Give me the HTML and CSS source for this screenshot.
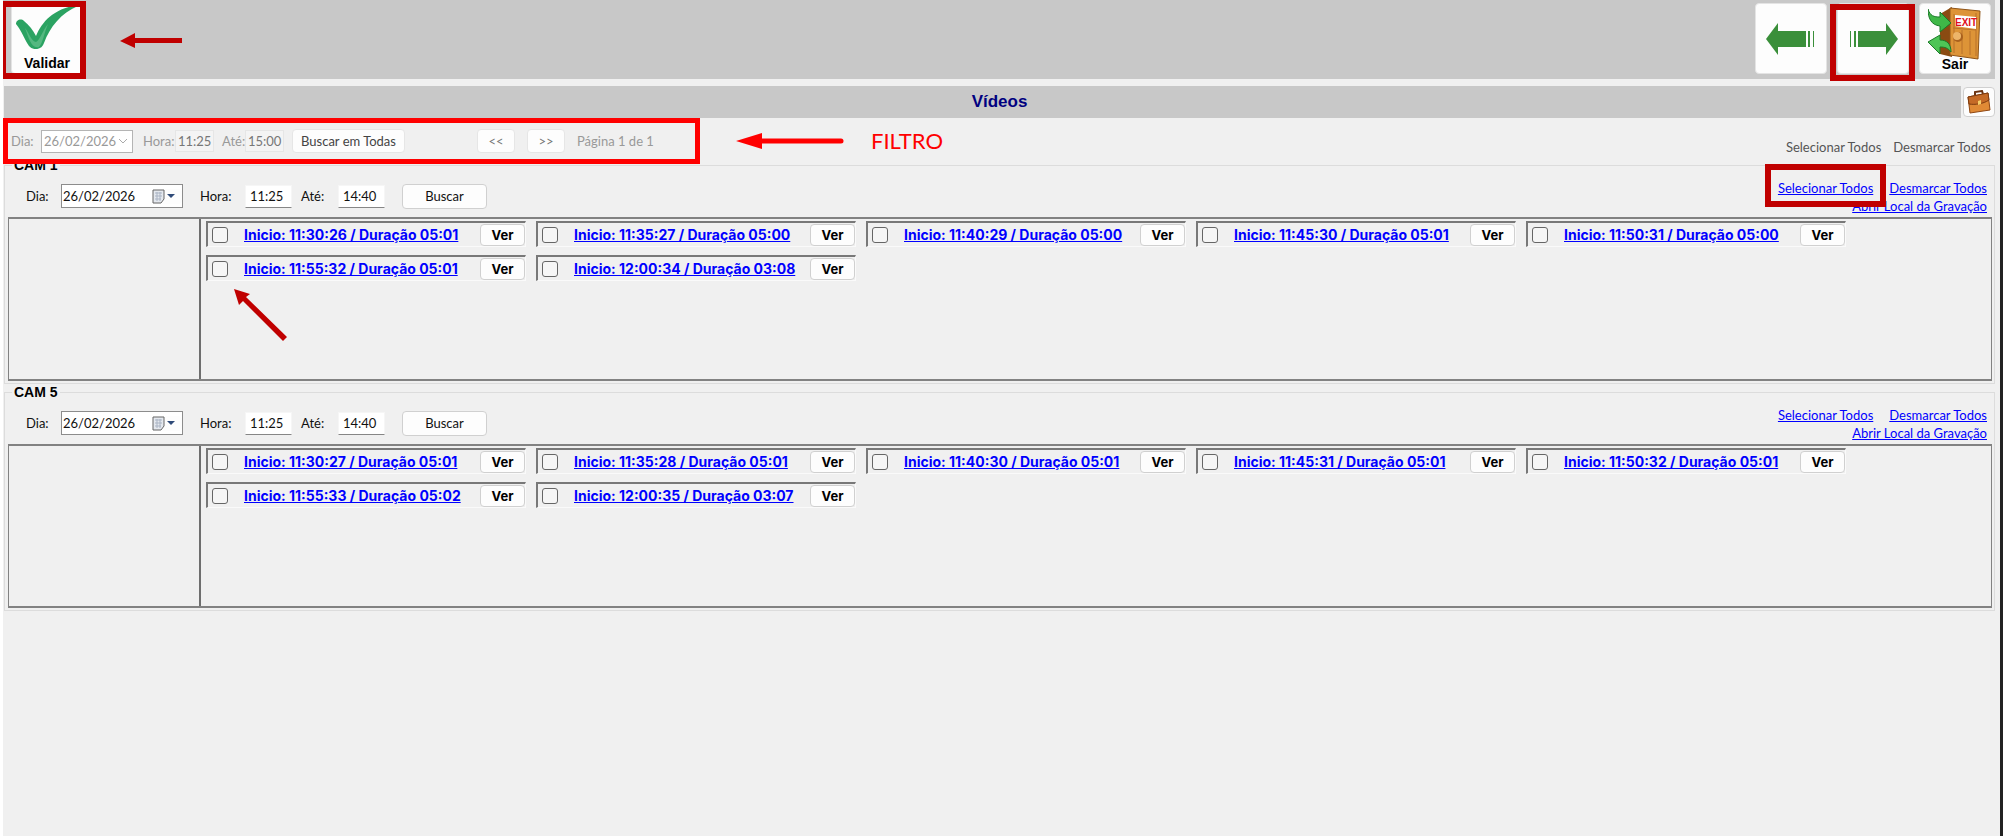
FILE: index.html
```
<!DOCTYPE html>
<html lang="pt">
<head>
    <meta charset="UTF-8">
    <meta name="viewport" content="width=device-width, initial-scale=1.0">
    <title>Vídeos</title>
    <link rel="stylesheet" href="styles.css">
</head>
<body>

    <header class="barra">
        <div class="marcado marcado-validar">
            <button class="btn-barra" type="button">
                <svg width="64" height="44" viewBox="0 0 64 44">
                    <path d="M1 19C1 15 6 13 9 16C14 20 18 25 21 31C27 17 38 4 62 0L63 1C46 8 35 22 29 38C27 45 18 46 14 41C9 34 7 26 1 19Z" fill="#2ba362"/>
                    <path d="M10 23C14 28 17 37 21 37C25 35 28 25 33 19C29 28 28 38 24 42C16 44 14 33 10 23Z" fill="#55b880"/>
                </svg>
                <span>Validar</span>
            </button>
        </div>
        <svg class="seta-validar" width="62" height="16" viewBox="0 0 62 16">
            <path d="M0 8L15 0V5H62V10H15V15Z" fill="#c00000"/>
        </svg>

        <nav class="barra-nav">
            <button class="btn-barra btn-icone" type="button" aria-label="Anterior">
                <svg width="50" height="32" viewBox="0 0 50 32">
                    <path d="M0 16L12 0V8H40V24H12V32ZM42 8H44V24H42ZM47 8H48V24H47Z" fill="#3a8f3a"/>
                </svg>
            </button>
            <div class="marcado marcado-proximo">
                <button class="btn-barra btn-icone" type="button" aria-label="Próximo">
                    <svg width="50" height="32" viewBox="0 0 50 32">
                        <path d="M50 16L38 0V8H10V24H38V32ZM6 8H8V24H6ZM2 8H3V24H2Z" fill="#3a8f3a"/>
                    </svg>
                </button>
            </div>
            <button class="btn-barra btn-sair" type="button">
                <svg width="54" height="54" viewBox="0 0 54 54">
                    <path d="M12 8L24 1V51L12 48Z" fill="#8a4b12"/>
                    <path d="M22 2L52 5L50 53L22 49Z" fill="#dd9437" stroke="#8f5417"/>
                    <path d="M25 22L48 24M26 8V47M48 7V50M34 24V48M42 25V49" stroke="#b8712a" fill="none"/>
                    <path d="M27 9L48 11V23L27 20Z" fill="#fff"/>
                    <text x="27" y="20" class="placa">EXIT</text>
                    <circle cx="30" cy="31" r="5" fill="#a9611e"/>
                    <circle cx="29" cy="30" r="4" fill="#edb569"/>
                    <path d="M0 3C2 10 6 11 12 11V6L23 17L12 26V20C3 19 0 12 0 3Z" fill="#3fb848" stroke="#1b7a28"/>
                    <path d="M0 36L12 29V34C19 34 23 38 23 46C20 42 17 41 12 41V48Z" fill="#4ec557" stroke="#1b7a28"/>
                </svg>
                <span>Sair</span>
            </button>
        </nav>
    </header>

    <div class="titulo">
        <h1>Vídeos</h1>
        <button class="btn-mala" type="button" aria-label="Arquivos">
            <svg width="24" height="24" viewBox="0 0 24 24">
                <path d="M8 5V2L15 1L16 4" fill="none" stroke="#6b3210" stroke-width="2"/>
                <path d="M1 7L21 3L23 20L3 23Z" fill="#e08a35" stroke="#8f4713"/>
                <path d="M1 7L21 3L22 10C16 14 8 15 2 14Z" fill="#c56a26" stroke="#7e3b10"/>
                <path d="M11 11L14 10V14L11 15Z" fill="#f6cf6a"/>
            </svg>
        </button>
    </div>

    <section class="filtro">
        <div class="filtro-campos">
            <label class="filtro-rotulo-dia" for="filtro-dia">Dia:</label>
            <select id="filtro-dia" class="filtro-dia" disabled>
                <option>26/02/2026</option>
            </select>
            <label class="filtro-rotulo-hora" for="filtro-hora">Hora:</label>
            <input id="filtro-hora" class="filtro-hora" type="text" value="11:25" disabled>
            <label class="filtro-rotulo-ate" for="filtro-ate">Até:</label>
            <input id="filtro-ate" class="filtro-hora" type="text" value="15:00" disabled>
            <button class="btn-todas" type="button">Buscar em Todas</button>
            <button class="btn-pagina" type="button">&lt;&lt;</button>
            <button class="btn-pagina" type="button">&gt;&gt;</button>
            <span class="pagina">Página 1 de 1</span>
        </div>
        <div class="nota-filtro">
            <svg width="108" height="18" viewBox="0 0 108 18">
                <path d="M0 9L26 1V17Z" fill="#f00"/>
                <path d="M24 9H105" stroke="#f00" stroke-width="5" stroke-linecap="round"/>
            </svg>
            <span>FILTRO</span>
        </div>
        <div class="filtro-acoes">
            <a href="#">Selecionar Todos</a>
            <a href="#">Desmarcar Todos</a>
        </div>
    </section>

    <fieldset class="camera">
        <legend>CAM 1</legend>
        <div class="camera-topo">
            <div class="campos">
                <label class="rotulo-dia" for="dia-1">Dia:</label>
                <div class="data">
                    <input id="dia-1" type="text" value="26/02/2026">
                    <button type="button" aria-label="Abrir calendário">
                        <svg width="24" height="15" viewBox="0 0 24 15">
                            <path d="M1 1H12V10L9 14H1Z" fill="#e4e8ee" stroke="#666"/>
                            <path d="M3 4H10M3 7H10M3 10H9M5 3V12M8 3V12" stroke="#aab4c4"/>
                            <path d="M15 5H23L19 9Z" fill="#2f4a78"/>
                        </svg>
                    </button>
                </div>
                <label class="rotulo-hora" for="hora-1">Hora:</label>
                <input id="hora-1" class="hora" type="text" value="11:25">
                <label class="rotulo-ate" for="ate-1">Até:</label>
                <input id="ate-1" class="hora" type="text" value="14:40">
                <button class="btn-buscar" type="button">Buscar</button>
            </div>
            <div class="acoes">
                <div class="acoes-linha">
                    <a class="selecionar selecionar-marcado" href="#">Selecionar Todos</a>
                    <a href="#">Desmarcar Todos</a>
                </div>
                <a href="#">Abrir Local da Gravação</a>
            </div>
        </div>
        <div class="painel">
            <div class="previa"></div>
            <div class="videos">
                <div class="video">
                    <input type="checkbox" aria-label="Selecionar 11:30:26">
                    <a href="#">Inicio: 11:30:26 / Duração 05:01</a>
                    <button type="button">Ver</button>
                </div>
                <div class="video">
                    <input type="checkbox" aria-label="Selecionar 11:35:27">
                    <a href="#">Inicio: 11:35:27 / Duração 05:00</a>
                    <button type="button">Ver</button>
                </div>
                <div class="video">
                    <input type="checkbox" aria-label="Selecionar 11:40:29">
                    <a href="#">Inicio: 11:40:29 / Duração 05:00</a>
                    <button type="button">Ver</button>
                </div>
                <div class="video">
                    <input type="checkbox" aria-label="Selecionar 11:45:30">
                    <a href="#">Inicio: 11:45:30 / Duração 05:01</a>
                    <button type="button">Ver</button>
                </div>
                <div class="video">
                    <input type="checkbox" aria-label="Selecionar 11:50:31">
                    <a href="#">Inicio: 11:50:31 / Duração 05:00</a>
                    <button type="button">Ver</button>
                </div>
                <div class="video">
                    <input type="checkbox" aria-label="Selecionar 11:55:32">
                    <a href="#">Inicio: 11:55:32 / Duração 05:01</a>
                    <button type="button">Ver</button>
                    <svg class="seta-caixa" width="54" height="54" viewBox="0 0 54 54">
                        <path d="M0 0L16 5L12 8L53 48L49 52L9 12L5 16Z" fill="#c00000"/>
                    </svg>
                </div>
                <div class="video">
                    <input type="checkbox" aria-label="Selecionar 12:00:34">
                    <a href="#">Inicio: 12:00:34 / Duração 03:08</a>
                    <button type="button">Ver</button>
                </div>
            </div>
        </div>
    </fieldset>

    <fieldset class="camera">
        <legend>CAM 5</legend>
        <div class="camera-topo">
            <div class="campos">
                <label class="rotulo-dia" for="dia-5">Dia:</label>
                <div class="data">
                    <input id="dia-5" type="text" value="26/02/2026">
                    <button type="button" aria-label="Abrir calendário">
                        <svg width="24" height="15" viewBox="0 0 24 15">
                            <path d="M1 1H12V10L9 14H1Z" fill="#e4e8ee" stroke="#666"/>
                            <path d="M3 4H10M3 7H10M3 10H9M5 3V12M8 3V12" stroke="#aab4c4"/>
                            <path d="M15 5H23L19 9Z" fill="#2f4a78"/>
                        </svg>
                    </button>
                </div>
                <label class="rotulo-hora" for="hora-5">Hora:</label>
                <input id="hora-5" class="hora" type="text" value="11:25">
                <label class="rotulo-ate" for="ate-5">Até:</label>
                <input id="ate-5" class="hora" type="text" value="14:40">
                <button class="btn-buscar" type="button">Buscar</button>
            </div>
            <div class="acoes">
                <div class="acoes-linha">
                    <a class="selecionar" href="#">Selecionar Todos</a>
                    <a href="#">Desmarcar Todos</a>
                </div>
                <a href="#">Abrir Local da Gravação</a>
            </div>
        </div>
        <div class="painel">
            <div class="previa"></div>
            <div class="videos">
                <div class="video">
                    <input type="checkbox" aria-label="Selecionar 11:30:27">
                    <a href="#">Inicio: 11:30:27 / Duração 05:01</a>
                    <button type="button">Ver</button>
                </div>
                <div class="video">
                    <input type="checkbox" aria-label="Selecionar 11:35:28">
                    <a href="#">Inicio: 11:35:28 / Duração 05:01</a>
                    <button type="button">Ver</button>
                </div>
                <div class="video">
                    <input type="checkbox" aria-label="Selecionar 11:40:30">
                    <a href="#">Inicio: 11:40:30 / Duração 05:01</a>
                    <button type="button">Ver</button>
                </div>
                <div class="video">
                    <input type="checkbox" aria-label="Selecionar 11:45:31">
                    <a href="#">Inicio: 11:45:31 / Duração 05:01</a>
                    <button type="button">Ver</button>
                </div>
                <div class="video">
                    <input type="checkbox" aria-label="Selecionar 11:50:32">
                    <a href="#">Inicio: 11:50:32 / Duração 05:01</a>
                    <button type="button">Ver</button>
                </div>
                <div class="video">
                    <input type="checkbox" aria-label="Selecionar 11:55:33">
                    <a href="#">Inicio: 11:55:33 / Duração 05:02</a>
                    <button type="button">Ver</button>
                </div>
                <div class="video">
                    <input type="checkbox" aria-label="Selecionar 12:00:35">
                    <a href="#">Inicio: 12:00:35 / Duração 03:07</a>
                    <button type="button">Ver</button>
                </div>
            </div>
        </div>
    </fieldset>

</body>
</html>
```
FILE: styles.css
```
*,
*::after {
    box-sizing: border-box;
}

body {
    margin: 0;
    min-height: 100vh;
    padding-right: 5px;
    border-left: 3px solid #fff;
    border-right: 3px solid #222;
    background-color: #f0f0f0;
    font-family: Lato, "Liberation Sans", sans-serif;
    font-size: 13px;
    line-height: 16px;
    color: #111;
}

button,
input,
select {
    font: inherit;
    color: inherit;
    margin: 0;
    padding: 0;
}

button {
    background-color: #fdfdfd;
    border: 1px solid #d0d0d0;
    border-radius: 4px;
}

svg {
    display: block;
}

a {
    color: #0000ff;
}

/* Barra superior */
.barra {
    display: flex;
    align-items: flex-start;
    height: 79px;
    padding: 3px 4px 0 8px;
    background-color: #c8c8c8;
}

.btn-barra {
    display: flex;
    flex-direction: column;
    align-items: center;
    justify-content: flex-end;
    width: 72px;
    height: 71px;
    border-color: #e4e4e4;
    font-family: "Liberation Sans", Arial, sans-serif;
    font-weight: bold;
    color: #000;
}

.btn-barra span {
    font-size: 14px;
}

.marcado-validar .btn-barra {
    padding-bottom: 2px;
    gap: 6px;
}

.btn-barra.btn-icone {
    justify-content: center;
}

.btn-sair {
    padding-bottom: 1px;
}

.btn-sair svg {
    margin-bottom: -4px;
}

.placa {
    font-size: 10px;
    font-weight: bold;
    fill: #e01020;
}

.barra-nav {
    display: flex;
    gap: 10px;
    margin-left: auto;
}

.marcado {
    position: relative;
}

.marcado::after {
    content: "";
    position: absolute;
    border: 6px solid #c00000;
    pointer-events: none;
}

.marcado-validar::after {
    inset: -2px -3px -5px -11px;
}

.marcado-proximo::after {
    inset: 1px -6px -7px -7px;
}

.seta-validar {
    margin: 30px 0 0 37px;
}

/* Título */
.titulo {
    display: flex;
    align-items: center;
    gap: 2px;
    margin-top: 7px;
    padding-left: 1px;
}

.titulo h1 {
    flex: 1;
    margin: 0;
    padding-left: 34px;
    background-color: #c8c8c8;
    font-family: "Liberation Sans", Arial, sans-serif;
    font-size: 17px;
    line-height: 32px;
    text-align: center;
    color: #000080;
}

.btn-mala {
    display: flex;
    align-items: center;
    justify-content: center;
    width: 32px;
    height: 30px;
}

/* Filtro */
.filtro {
    position: relative;
    display: flex;
    align-items: flex-start;
    height: 39px;
}

.filtro-campos {
    display: flex;
    align-items: center;
    width: 697px;
    height: 46px;
    padding-left: 8px;
    color: #999;
}

.filtro-campos::after {
    content: "";
    position: absolute;
    top: 0;
    left: 0;
    width: 697px;
    height: 46px;
    border: 5px solid #ff0000;
    pointer-events: none;
}

.filtro-rotulo-dia {
    width: 30px;
}

.filtro-rotulo-hora {
    width: 32px;
}

.filtro-rotulo-ate {
    width: 23px;
}

.filtro-dia {
    appearance: none;
    width: 92px;
    height: 23px;
    margin-right: 10px;
    padding-left: 2px;
    border: 1px solid #b4b4b4;
    background: #fff url("data:image/svg+xml,%3Csvg xmlns='http://www.w3.org/2000/svg' width='10' height='6'%3E%3Cpath d='M1 1L5 5L9 1' fill='none' stroke='%23aaa'/%3E%3C/svg%3E") no-repeat right 4px center;
    opacity: 1;
}

.filtro-hora {
    width: 39px;
    height: 22px;
    margin-right: 8px;
    padding-left: 2px;
    border: 1px solid #e6e6e6;
    background-color: #f4f4f4;
    color: #777;
}

.filtro-campos button {
    height: 24px;
    border-color: #e6e6e6;
}

.filtro-campos .btn-todas {
    width: 113px;
    margin-right: 72px;
    color: #444;
}

.btn-pagina {
    width: 38px;
    margin-right: 12px;
    color: #777;
}

.nota-filtro {
    display: flex;
    align-items: center;
    gap: 27px;
    padding: 8px 0 0 36px;
    color: #ff0000;
    font-size: 22px;
    line-height: 30px;
}

.filtro-acoes {
    display: flex;
    gap: 12px;
    margin: 21px 4px 0 auto;
}

.filtro-acoes a {
    color: #555;
    text-decoration: none;
}

/* Câmeras */
.camera {
    min-width: 0;
    margin: 0 0 0 1px;
    padding: 0 2px 2px 3px;
    border: 1px solid #dcdcdc;
}

.camera legend {
    margin-left: 4px;
    padding: 0 2px;
    font-family: "Liberation Sans", Arial, sans-serif;
    font-size: 14px;
    font-weight: bold;
    color: #000;
}

.camera-topo {
    display: flex;
    justify-content: space-between;
    height: 44px;
}

.campos {
    display: flex;
    align-items: center;
    height: 46px;
    padding-left: 18px;
}

.rotulo-dia {
    width: 35px;
}

.data {
    display: flex;
    align-items: center;
    width: 122px;
    height: 24px;
    border: 1px solid #8c8c8c;
    background-color: #fff;
}

.data input {
    flex: 1;
    min-width: 0;
    padding-left: 1px;
    border: none;
    outline: none;
}

.data button {
    padding-right: 6px;
    border: none;
}

.rotulo-hora {
    width: 45px;
    margin-left: 17px;
}

.rotulo-ate {
    width: 37px;
    margin-left: 9px;
}

.hora {
    width: 47px;
    height: 23px;
    padding-left: 4px;
    border: 1px solid #f6f6f6;
    border-bottom: 1px solid #868686;
    background-color: #fff;
}

.btn-buscar {
    width: 85px;
    height: 25px;
    margin-left: 17px;
}

.acoes {
    display: flex;
    flex-direction: column;
    align-items: flex-end;
    gap: 2px;
    padding: 7px 5px 0 0;
}

.acoes-linha {
    display: flex;
    gap: 16px;
}

.selecionar {
    position: relative;
}

.selecionar-marcado::after {
    content: "";
    position: absolute;
    inset: -16px -13px -11px -13px;
    border: 6px solid #c00000;
}

.painel {
    display: flex;
    height: 164px;
    border: 2px solid #828282;
    border-right-width: 1px;
    border-left-width: 1px;
}

.previa {
    width: 192px;
    border-right: 2px solid #6e6e6e;
}

.videos {
    flex: 1;
    display: flex;
    flex-wrap: wrap;
    align-content: flex-start;
    gap: 8px 10px;
    padding: 2px 5px;
}

.video {
    position: relative;
    display: flex;
    align-items: center;
    width: 320px;
    height: 26px;
    padding-left: 4px;
    border-top: 2px solid #787878;
    border-left: 2px solid #787878;
    border-right: 1px solid #fafafa;
    border-bottom: 1px solid #fafafa;
}

.video input {
    appearance: none;
    width: 16px;
    height: 16px;
    border: 1px solid #666;
    border-radius: 3px;
    background-color: #f6f6f6;
}

.video a {
    margin-left: 16px;
    font-family: Inter, "Liberation Sans", sans-serif;
    font-size: 14px;
    font-weight: bold;
}

.video button {
    width: 45px;
    height: 22px;
    margin-left: auto;
    font-family: Inter, "Liberation Sans", sans-serif;
    font-weight: bold;
    color: #000;
}

.seta-caixa {
    position: absolute;
    top: 32px;
    left: 26px;
}
```
